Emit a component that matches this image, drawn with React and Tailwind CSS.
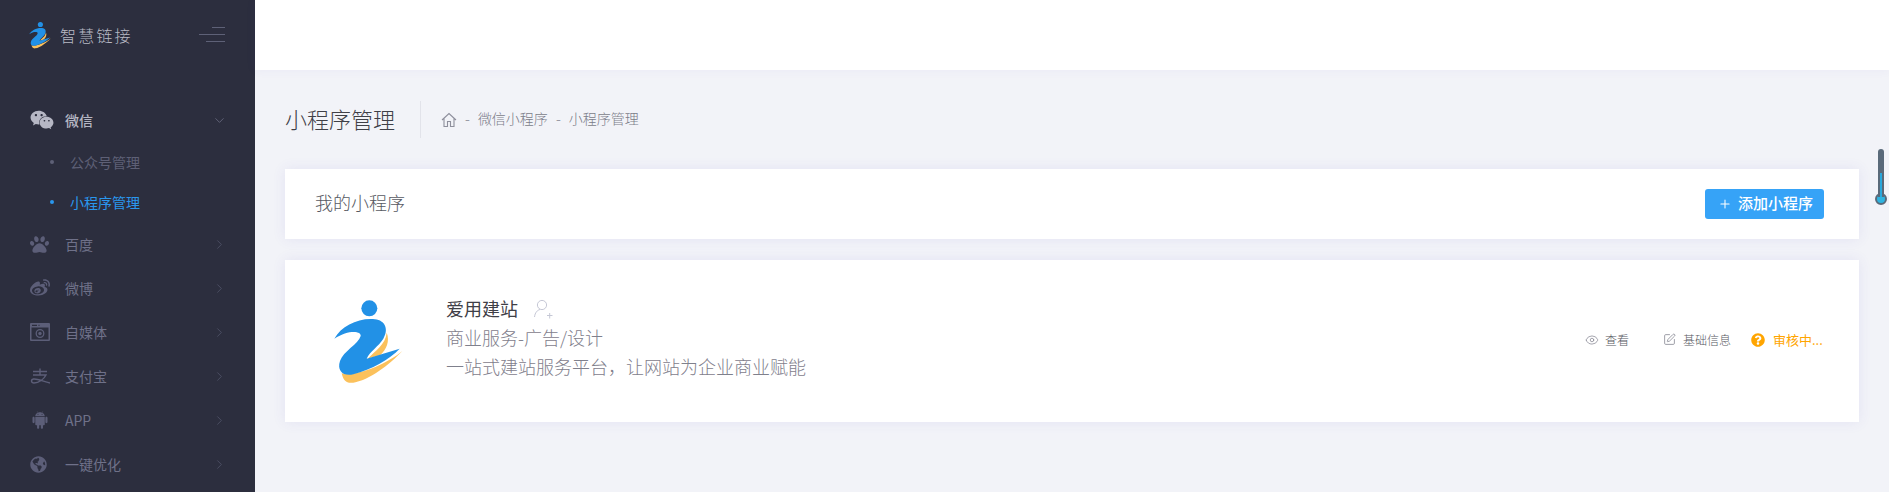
import React from "react";
import { ChevronDown, ChevronRight, Eye, Plus, SquarePen } from "lucide-react";
import { FaWeixin, FaPaw, FaWeibo, FaGlobeAmericas, FaQuestionCircle } from "react-icons/fa";
import { AiFillAndroid } from "react-icons/ai";

// Logo drawn on a 300x330 canvas
const Logo = ({ className }) => (
  <svg viewBox="0 0 300 330" className={className}>
    <path d="M215 140C212 175 180 195 158 218L195 208C215 190 225 165 215 140Z" fill="#fbc15c" />
    <path d="M262 195C224 235 165 282 115 290C95 293 85 285 80 262C125 272 214 235 262 195Z" fill="#fbc15c" />
    <circle cx="163" cy="67" r="24" fill="#2291e6" />
    <path d="M58 158C80 120 130 95 180 100C210 103 222 130 205 158C190 182 165 195 155 218L254 188C224 220 170 250 115 265C85 272 65 255 75 225C85 195 130 175 137 150C140 135 100 130 58 158Z" fill="#2291e6" />
  </svg>
);

const MediaIcon = () => (
  <svg viewBox="0 0 20 18" className="w-5 h-[18px]" fill="currentColor">
    <path fillRule="evenodd" d="M1 0h18a1 1 0 0 1 1 1v16a1 1 0 0 1-1 1H1a1 1 0 0 1-1-1V1a1 1 0 0 1 1-1Zm.5 4.5v12h17v-12h-17ZM2 1.8v1.2h5V1.8H2Zm6.5 0v1.2h1V1.8h-1Z" />
    <circle cx="10" cy="10.5" r="3.8" fill="none" stroke="currentColor" strokeWidth="1.3" />
    <circle cx="10" cy="10.5" r="1.7" />
  </svg>
);

const AlipayIcon = () => (
  <svg viewBox="0 0 20 16" className="w-5 h-4" fill="none" stroke="currentColor" strokeWidth="1.4">
    <path d="M3 3.5h14M10 0.5v6M3 7h13C14 11 9 15 4 15C1 15 0.5 11.5 3.5 11C8 10.5 14 14 20 15" />
  </svg>
);

const HomeIcon = () => (
  <svg viewBox="0 0 16 16" className="w-4 h-4" fill="none" stroke="#8e8f9c" strokeWidth="1.1">
    <path d="M1 8 8 1.5 15 8M3 6.5V14.5H6.5V9.5H9.5V14.5H13V6.5" />
  </svg>
);

const UserPlusIcon = () => (
  <svg viewBox="0 0 20 20" className="w-5 h-5" fill="none" stroke="#c6c8d6" strokeWidth="1">
    <circle cx="9" cy="6" r="4.6" />
    <path d="M1.5 18C2 13.5 4.5 11 7 10.5M14 16.5h5.5M16.7 14v5.5" />
  </svg>
);

const menus = [
  { name: "百度", icon: <FaPaw size={19} /> },
  { name: "微博", icon: <FaWeibo size={20} /> },
  { name: "自媒体", icon: <MediaIcon /> },
  { name: "支付宝", icon: <AlipayIcon /> },
  { name: "APP", icon: <AiFillAndroid size={20} /> },
  { name: "一键优化", icon: <FaGlobeAmericas size={17} /> },
];

const Sidebar = () => (
  <aside className="w-[255px] shrink-0 bg-[#2c2e3e] flex flex-col">
    <div className="h-[70px] pl-[23px] pr-[30px] flex items-center">
      <Logo className="w-[32px] h-[36px] -mt-[1px]" />
      <span className="ml-[5px] text-[16px] tracking-[2.2px] text-[#b9bac5] font-light">智慧链接</span>
      <div className="ml-auto flex flex-col items-end gap-[6px] -mt-[1px]">
        <span className="w-[13px] h-px bg-[#5e6177]"></span>
        <span className="w-[26px] h-px bg-[#5e6177]"></span>
        <span className="w-[19px] h-px bg-[#5e6177]"></span>
      </div>
    </div>

    <nav className="pt-[28px]">
      <div className="h-11 pl-[30px] pr-[28px] flex items-center text-[#b6b7c4]">
        <span className="w-[35px]"><FaWeixin size={24} /></span>
        <span className="text-[14px] font-medium">微信</span>
        <ChevronDown size={15} strokeWidth={1} className="ml-auto text-[#7d7f96]" />
      </div>
      <div className="h-10 pl-[50px] flex items-center text-[14px] text-[#5e6076]">
        <span className="w-1 h-1 rounded-full bg-[#5e6076] mr-4"></span>
        公众号管理
      </div>
      <div className="h-10 pl-[50px] flex items-center text-[14px] text-[#2a97ee]">
        <span className="w-1 h-1 rounded-full bg-[#2a97ee] mr-4"></span>
        小程序管理
      </div>
      {menus.map((item) => (
        <div key={item.name} className="h-11 pl-[30px] pr-[28px] flex items-center text-[#6f7189]">
          <span className="w-[35px] flex items-center text-[#5c5e78]">{item.icon}</span>
          <span className="text-[14px]">{item.name}</span>
          <ChevronRight size={15} strokeWidth={1} className="ml-auto text-[#5c5e75]" />
        </div>
      ))}
    </nav>
  </aside>
);

const App = () => {
  return (
    <div
      className="relative w-full h-[492px] overflow-hidden flex bg-[#f2f3f8]"
      style={{ fontFamily: '"Noto Sans CJK SC", "Liberation Sans", sans-serif' }}
    >
      <Sidebar />

      <main className="flex-1 min-w-0">
        <div className="h-[70px] bg-white shadow-[0_0_10px_0_rgba(82,63,185,0.06)]"></div>

        <div className="px-[30px]">
          {/* 页面标题 */}
          <div className="h-[99px] flex items-center">
            <h1 className="text-[22px] font-light text-[#3f4047] -mt-[2px]">小程序管理</h1>
            <span className="w-px h-[37px] bg-[#e2e3ea] ml-[25px] mr-[20px]"></span>
            <HomeIcon />
            <span className="mx-[8px] text-[14px] text-[#9a9ba6] -mt-[2px]">-</span>
            <span className="text-[14px] font-light text-[#7b7c88] -mt-[2px]">微信小程序</span>
            <span className="mx-[8px] text-[14px] text-[#9a9ba6] -mt-[2px]">-</span>
            <span className="text-[14px] font-light text-[#7b7c88] -mt-[2px]">小程序管理</span>
          </div>

          {/* 标题卡片 */}
          <div className="h-[70px] bg-white pl-[30px] pr-[35px] flex items-center justify-between shadow-[0_0_13px_0_rgba(82,63,185,0.09)]">
            <span className="text-[18px] font-light text-[#575962] -mt-[3px]">我的小程序</span>
            <button className="w-[119px] h-[30px] rounded-[3px] bg-[#36a3f7] text-white flex items-center pl-[13px]">
              <Plus size={14} strokeWidth={1.8} />
              <span className="ml-[6px] text-[15px] font-medium -mt-[1px]">添加小程序</span>
            </button>
          </div>

          {/* 小程序卡片 */}
          <div className="mt-[21px] h-[162px] bg-white pl-[30px] pr-[35px] flex items-center shadow-[0_0_13px_0_rgba(82,63,185,0.09)]">
            <Logo className="w-[100px] h-[110px] shrink-0" />
            <div className="ml-[31px] text-[18px] leading-[29px] text-[#7f808c] -mt-[7px]">
              <div className="flex items-center text-[#3f4047]">
                爱用建站
                <span className="ml-[15px]"><UserPlusIcon /></span>
              </div>
              <div className="font-light">商业服务-广告/设计</div>
              <div className="font-light">一站式建站服务平台，让网站为企业商业赋能</div>
            </div>
            <div className="ml-auto flex items-center text-[12px] font-light text-[#575962] -mt-[3px]">
              <Eye size={14} strokeWidth={1.2} className="text-[#7f808c]" />
              <span className="ml-[6px]">查看</span>
              <SquarePen size={13} strokeWidth={1.4} className="ml-[34px] text-[#7f808c]" />
              <span className="ml-[7px]">基础信息</span>
              <FaQuestionCircle size={14} className="ml-[20px] text-[#ffa500]" />
              <span className="ml-[8px] w-[51px] text-[13px] font-normal text-[#ffa500]">审核中...</span>
            </div>
          </div>
        </div>
      </main>

      {/* 右侧滚动温度条 */}
      <div className="absolute left-[1876px] top-[149px] w-[10px] h-[56px] flex flex-col items-center">
        <div className="relative w-[6px] h-[50px] rounded-t-full bg-[#5a6a7a]">
          <div className="absolute left-[2px] bottom-0 w-[2px] h-[24px] bg-[#2aa8dc]"></div>
        </div>
        <div className="w-[12px] h-[12px] -mt-[4px] shrink-0 rounded-full bg-[#2fb4e0] border-2 border-[#5a6a7a]"></div>
      </div>
    </div>
  );
};

export default App;
